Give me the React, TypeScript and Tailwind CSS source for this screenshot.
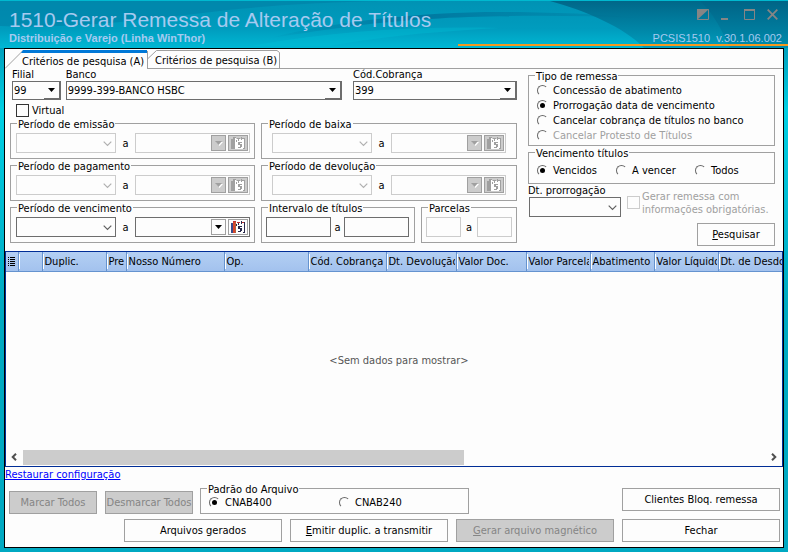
import clsx from "clsx";
import React from "react";

const columns = [
  { label: "", width: "w-[24px]" },
  { label: "Duplic.", width: "w-[64px]" },
  { label: "Pre", width: "w-[20px]" },
  { label: "Nosso Número", width: "w-[98px]" },
  { label: "Op.", width: "w-[84px]" },
  { label: "Cód. Cobrança", width: "w-[78px]" },
  { label: "Dt. Devolução", width: "w-[70px]" },
  { label: "Valor Doc.", width: "w-[70px]" },
  { label: "Valor Parcela", width: "w-[64px]" },
  { label: "Abatimento", width: "w-[64px]" },
  { label: "Valor Líquido", width: "w-[64px]" },
  { label: "Dt. de Desdobramento", width: "w-[120px]" },
];

type GroupProps = {
  title: string;
  className?: string;
  children: React.ReactNode;
};

const Group = ({ title, className, children }: GroupProps) => (
  <fieldset className={clsx("min-w-0 border border-[#a0a0a0]", className)}>
    <legend className="ml-1.5 h-3 bg-[#fdfdfd] px-px leading-4">{title}</legend>
    {children}
  </fieldset>
);

type ComboProps = {
  id: string;
  value: string;
  label: string;
  className?: string;
};

const Combo = ({ id, value, label, className }: ComboProps) => (
  <div className={className}>
    <label htmlFor={id} className="block leading-3">
      {label}
    </label>
    <div className="relative">
      <select
        id={id}
        className="block h-[19px] w-full appearance-none border border-[#6d6d6d] bg-[#fdfdfd] pl-px"
      >
        <option>{value}</option>
      </select>
      <span className="pointer-events-none absolute right-px bottom-px flex h-[17px] w-4 items-center justify-center border-r border-b border-[#6d6d6d]">
        <svg width="7" height="4" viewBox="0 0 7 4">
          <path d="M0 0h7L3.5 4z" fill="#000" />
        </svg>
      </span>
    </div>
  </div>
);

type DateSelectProps = {
  label: string;
  id?: string;
  disabled?: boolean;
  className?: string;
};

const DateSelect = ({ label, id, disabled, className }: DateSelectProps) => (
  <div className={clsx("relative", className)}>
    <select
      id={id}
      aria-label={id ? undefined : label}
      disabled={disabled}
      className="block h-5 w-full appearance-none border border-[#6d6d6d] bg-[#fdfdfd] opacity-100 disabled:border-[#cccccc]"
    />
    <svg
      className={clsx(
        "pointer-events-none absolute top-2 right-1",
        disabled ? "text-[#b0b0b0]" : "text-[#606060]"
      )}
      width="9"
      height="6"
      viewBox="0 0 9 6"
    >
      <path d="M.7.7l3.8 3.8L8.3.7" fill="none" stroke="currentColor" strokeWidth="1.2" />
    </svg>
  </div>
);

const CalendarIcon = ({ disabled }: { disabled?: boolean }) => {
  const ink = disabled ? "#a0a0a0" : "#28284a";
  return (
    <svg width="16" height="15" viewBox="0 0 16 15" shapeRendering="crispEdges">
      <path d="M1 3h2v10H1z" fill={disabled ? "#a0a0a0" : "#3a4a8a"} />
      <path d="M3 2h2v11H3z" fill={disabled ? "#a0a0a0" : "#d8452c"} />
      <path d="M5 2h1v11H5z" fill={disabled ? "#ffffff" : "#b0643c"} />
      <path d="M6 3h8v10H6z" fill="#ffffff" />
      <path d="M3 1h3v1H3zM7 2h3v1H7zM12 2h2v1h-2z" fill={disabled ? "#a0a0a0" : "#c03030"} />
      <path d="M8 3h1v2H8zM11 1h1v3h-1zM14 2h1v11h-1zM13 12h1v1h-1zM6 4h1v2H6z" fill={ink} />
      <path d="M8 6h4v1h-4zM8 7h2v1H8zM8 8h4v1H8zM10 9h2v2h-2zM8 11h3v1H8z" fill={ink} />
    </svg>
  );
};

const DateBox = ({ label, disabled }: { label: string; disabled?: boolean }) => {
  const button = clsx(
    "flex h-4 items-center justify-center border border-[#a0a0a0]",
    disabled ? "bg-[#cccccc]" : "bg-[#fdfdfd]"
  );
  return (
    <div
      className={clsx(
        "flex h-5 w-[115px] items-center gap-0.5 border pr-px",
        disabled ? "border-[#cccccc]" : "border-[#6d6d6d]"
      )}
    >
      <input
        type="text"
        aria-label={label}
        disabled={disabled}
        className="h-full min-w-0 flex-1 bg-transparent px-1 outline-none"
      />
      <button type="button" aria-label={`${label}: abrir`} disabled={disabled} className={clsx(button, "w-[15px]")}>
        <svg width="8" height="5" viewBox="0 0 8 5">
          {disabled && <path d="M1 1h7L4.5 5z" fill="#fff" />}
          <path d="M0 0h7L3.5 4z" fill={disabled ? "#a0a0a0" : "#000"} />
        </svg>
      </button>
      <button type="button" aria-label={`${label}: calendário`} disabled={disabled} className={clsx(button, "w-5")}>
        <CalendarIcon disabled={disabled} />
      </button>
    </div>
  );
};

const Period = ({ title, disabled, wide }: { title: string; disabled?: boolean; wide?: boolean }) => (
  <Group title={title}>
    <div className={clsx("flex items-center pt-1 pb-[5px]", wide ? "pl-2.5" : "pl-[5px]")}>
      <DateSelect label={`${title}, início`} disabled={disabled} className="w-[100px]" />
      <span className="w-[19px] text-center">a</span>
      <DateBox label={`${title}, fim`} disabled={disabled} />
    </div>
  </Group>
);

type RadioProps = {
  name: string;
  label: string;
  checked?: boolean;
  disabled?: boolean;
  className?: string;
};

const Radio = ({ name, label, checked, disabled, className }: RadioProps) => (
  <label className={clsx("flex h-[15px] items-center gap-[5px]", disabled && "text-[#a0a0a0]", className)}>
    <input
      type="radio"
      name={name}
      defaultChecked={checked}
      disabled={disabled}
      className="flex size-[11px] shrink-0 appearance-none items-center justify-center rounded-full border border-transparent border-t-[#696969] border-l-[#696969] before:size-[5px] before:rounded-full checked:before:bg-black"
    />
    {label}
  </label>
);

const Button = ({ disabled, className, children }: { disabled?: boolean; className?: string; children: React.ReactNode }) => (
  <button
    type="button"
    disabled={disabled}
    className={clsx(
      "h-[23px] border border-[#a0a0a0] whitespace-nowrap",
      disabled ? "bg-[#cccccc] text-[#858585]" : "bg-[#fdfdfd]",
      className
    )}
  >
    {children}
  </button>
);

const textBox = "h-5 min-w-0 border bg-[#fdfdfd] px-1 outline-none";

const TitleBar = () => (
  <header className="relative h-12">
    <svg className="absolute inset-0 h-full w-full" viewBox="0 0 788 48" preserveAspectRatio="none">
      <defs>
        <linearGradient id="sky" x1="0" y1="0" x2="0" y2="1">
          <stop offset="0" stopColor="#0092b4" />
          <stop offset="0.6" stopColor="#009cbe" />
          <stop offset="1" stopColor="#00b8d4" />
        </linearGradient>
        <linearGradient id="deep" x1="0" y1="0" x2="0" y2="1">
          <stop offset="0" stopColor="#005c7e" />
          <stop offset="1" stopColor="#0098b8" />
        </linearGradient>
        <linearGradient id="swoop" x1="0" y1="0" x2="1" y2="0">
          <stop offset="0" stopColor="#0078a0" stopOpacity="0" />
          <stop offset="0.4" stopColor="#0078a0" />
          <stop offset="1" stopColor="#0082a6" stopOpacity="0.3" />
        </linearGradient>
      </defs>
      <path d="M0 0h788v48H0z" fill="url(#sky)" />
      <path d="M0 26C90 30 180 14 250 8 300 3 350 2 380 1H0z" fill="#0080a6" opacity=".6" />
      <path d="M270 38C330 22 420 12 500 12c60 0 110 3 140 6-70-3-150-3-210 1-70 4-110 12-160 19z" fill="url(#swoop)" />
      <path d="M250 46C340 30 420 26 500 28 420 32 360 40 330 46z" fill="#00c0d8" opacity=".35" />
      <path d="M550 1c36 10 74 26 94 47h144V1z" fill="url(#deep)" opacity=".8" />
      <path d="M700 1c14 12 22 30 30 47h58V1z" fill="#005c7e" opacity=".25" />
      <path d="M0 .5h788" stroke="#00b9d0" />
      <path d="M458 45h330" stroke="#f7981d" strokeWidth="2" />
    </svg>
    <div className="relative flex h-full justify-between pr-1.5 pl-[9px] font-['Liberation_Sans',Arial,sans-serif] text-[#a6caf0]">
      <div className="pt-[7px]">
        <h1 className="text-[21px] leading-[25px]">1510-Gerar Remessa de Alteração de Títulos</h1>
        <p className="text-[11px] leading-3 font-bold">Distribuição e Varejo (Linha WinThor)</p>
      </div>
      <div className="flex flex-col items-end pt-[9px]">
        <div className="flex gap-3 pr-1 text-[#858585]">
          <button type="button" aria-label="Aparência">
            <svg width="12" height="11" viewBox="0 0 12 11">
              <path d="M.5.5h11v10H.5z" fill="none" stroke="currentColor" />
              <path d="M0 0h12L0 11z" fill="currentColor" />
            </svg>
          </button>
          <button type="button" aria-label="Minimizar">
            <svg width="11" height="11" viewBox="0 0 11 11">
              <path d="M0 9h7v2H0z" fill="currentColor" />
            </svg>
          </button>
          <button type="button" aria-label="Maximizar">
            <svg width="11" height="11" viewBox="0 0 11 11">
              <path d="M.5.5h10v10H.5z" fill="none" stroke="currentColor" />
              <path d="M0 0h11v2H0z" fill="currentColor" />
            </svg>
          </button>
          <button type="button" aria-label="Fechar janela">
            <svg width="11" height="11" viewBox="0 0 11 11">
              <path d="M.7.7l9.6 9.6M10.3.7L.7 10.3" stroke="currentColor" strokeWidth="1.8" />
            </svg>
          </button>
        </div>
        <p className="mt-3 text-[11px] leading-3 whitespace-pre">PCSIS1510  v.30.1.06.002</p>
      </div>
    </div>
  </header>
);

const Tabs = () => (
  <div role="tablist" className="flex h-5 items-end border-b border-[#a0a0a0]">
    <button type="button" role="tab" aria-selected="true" className="relative -mb-px h-5 w-[143px] bg-[#fdfdfd] pt-1 pl-[17px] text-left whitespace-nowrap">
      <svg className="absolute inset-0 h-full w-full" viewBox="0 0 143 20">
        <path d="M0 19.5L18 1.5M142.5 2v18" fill="none" stroke="#a0a0a0" />
        <path d="M18 1h124v3H16z" fill="#0078d7" />
      </svg>
      <span className="relative">Critérios de pesquisa (A)</span>
    </button>
    <button type="button" role="tab" aria-selected="false" className="relative h-[19px] w-[132px] pt-1 pl-[7px] text-left whitespace-nowrap">
      <svg className="absolute inset-0 h-full w-full" viewBox="0 0 132 19">
        <path d="M0 9.5L8.5 1.5H129l2.5 2V19" fill="none" stroke="#a0a0a0" />
      </svg>
      <span className="relative">Critérios de pesquisa (B)</span>
    </button>
  </div>
);

const Filters = () => (
  <div className="flex justify-between pr-2 pb-[5px] pl-[5px]">
    <div className="w-[507px]">
      <div className="flex pl-0.5">
        <Combo id="filial" label="Filial" value="99" className="w-[49px]" />
        <Combo id="banco" label="Banco" value="9999-399-BANCO HSBC" className="ml-[5px] w-[278px]" />
        <Combo id="cobranca" label="Cód.Cobrança" value="399" className="ml-[11px] w-[165px]" />
      </div>
      <label className="mt-1 ml-1.5 flex h-[13px] w-fit items-center gap-[3px]">
        <input type="checkbox" className="size-[13px] appearance-none border border-[#333333] bg-[#fdfdfd]" />
        Virtual
      </label>
      <div className="flex justify-between">
        <div className="flex w-[245px] flex-col">
          <Period title="Período de emissão" disabled />
          <Period title="Período de pagamento" disabled />
          <Period title="Período de vencimento" />
        </div>
        <div className="flex w-64 flex-col">
          <Period title="Período de baixa" disabled wide />
          <Period title="Período de devolução" disabled wide />
          <div className="flex justify-between">
            <Group title="Intervalo de títulos" className="w-[154px]">
              <div className="flex items-center px-1 pt-1 pb-[5px]">
                <input type="text" aria-label="Título inicial" className={clsx(textBox, "w-[65px] border-[#6d6d6d]")} />
                <span className="w-[13px] text-center">a</span>
                <input type="text" aria-label="Título final" className={clsx(textBox, "w-[65px] border-[#6d6d6d]")} />
              </div>
            </Group>
            <Group title="Parcelas" className="w-24">
              <div className="flex items-center px-1 pt-1 pb-[5px]">
                <input type="text" disabled aria-label="Parcela inicial" className={clsx(textBox, "w-[35px] border-[#cccccc]")} />
                <span className="w-4 text-center">a</span>
                <input type="text" disabled aria-label="Parcela final" className={clsx(textBox, "w-[35px] border-[#cccccc]")} />
              </div>
            </Group>
          </div>
        </div>
      </div>
    </div>

    <div className="flex w-[247px] flex-col">
      <Group title="Tipo de remessa">
        <div className="pt-0.5 pb-0.5 pl-2">
          <Radio name="tipo" label="Concessão de abatimento" />
          <Radio name="tipo" label="Prorrogação data de vencimento" checked />
          <Radio name="tipo" label="Cancelar cobrança de títulos no banco" />
          <Radio name="tipo" label="Cancelar Protesto de Títulos" disabled />
        </div>
      </Group>
      <Group title="Vencimento títulos">
        <div className="flex pt-[5px] pb-[5px] pl-2">
          <Radio name="vencimento" label="Vencidos" checked className="w-[79px]" />
          <Radio name="vencimento" label="A vencer" className="w-[79px]" />
          <Radio name="vencimento" label="Todos" />
        </div>
      </Group>
      <div className="flex">
        <div className="w-[93px]">
          <label htmlFor="prorrogacao" className="block leading-[13px]">
            Dt. prorrogação
          </label>
          <DateSelect id="prorrogacao" label="Dt. prorrogação" className="ml-px" />
        </div>
        <label className="mt-1.5 ml-1.5 flex items-start gap-0.5 text-[#a0a0a0]">
          <input type="checkbox" disabled className="mt-1.5 size-[13px] appearance-none border border-[#cccccc]" />
          <span className="leading-[13px] whitespace-nowrap">
            Gerar remessa com
            <br />
            informações obrigatórias.
          </span>
        </label>
      </div>
      <Button className="mt-1.5 w-[78px] self-end">
        <u>P</u>esquisar
      </Button>
    </div>
  </div>
);

const Grid = () => (
  <div className="flex flex-1 flex-col border border-[#002d96]">
    <div className="overflow-hidden">
      <table className="w-full table-fixed border-collapse">
        <thead>
          <tr className="h-[19px] bg-linear-to-b from-[#b3cff3] to-[#a3c2ee]">
            <th className="w-3 border-r border-b border-[#6593cf] p-0">
              <svg width="11" height="11" viewBox="0 0 11 11" shapeRendering="crispEdges">
                <path d="M2 1h1v1H2zM4 1h5v1H4zM2 3h1v1H2zM4 3h5v1H4zM2 5h1v1H2zM4 5h5v1H4zM2 7h1v1H2zM4 7h5v1H4zM2 9h1v1H2zM4 9h5v1H4z" fill="#000" />
              </svg>
            </th>
            {columns.map((col) => (
              <th
                key={col.label}
                scope="col"
                className={clsx(
                  "overflow-hidden border-r border-b border-[#6593cf] p-0 text-left font-normal whitespace-nowrap",
                  col.width
                )}
              >
                <div className="mr-px h-[15px] overflow-hidden border-l border-white pl-px leading-[15px]">{col.label}</div>
              </th>
            ))}
          </tr>
        </thead>
      </table>
    </div>
    <p className="flex min-h-40 flex-1 items-center justify-center pl-2.5 text-[#555555]">&lt;Sem dados para mostrar&gt;</p>
    <div className="flex h-[17px] items-center justify-between pr-[5px] pb-px pl-[5px]">
      <button type="button" aria-label="Rolar para a esquerda" className="w-3">
        <svg width="6" height="8" viewBox="0 0 6 8">
          <path d="M5 .7L1.7 4 5 7.3" fill="none" stroke="#505050" strokeWidth="2" />
        </svg>
      </button>
      <div className="h-[15px] flex-1">
        <div className="h-full w-[59%] bg-[#cccccc]" />
      </div>
      <button type="button" aria-label="Rolar para a direita">
        <svg width="6" height="8" viewBox="0 0 6 8">
          <path d="M1 .7L4.3 4 1 7.3" fill="none" stroke="#505050" strokeWidth="2" />
        </svg>
      </button>
    </div>
  </div>
);

const Footer = () => (
  <footer className="pr-[3px] pb-[5px]">
    <a href="#" className="block w-fit leading-[15px] text-[#0000ff] underline">
      Restaurar configuração
    </a>
    <div className="flex items-end pl-1">
      <Button disabled className="w-[88px]">
        Marcar Todos
      </Button>
      <Button disabled className="ml-2 w-[88px]">
        Desmarcar Todos
      </Button>
      <Group title="Padrão do Arquivo" className="ml-[7px] w-[269px]">
        <div className="flex pt-px pb-[3px] pl-2">
          <Radio name="padrao" label="CNAB400" checked className="w-[130px]" />
          <Radio name="padrao" label="CNAB240" />
        </div>
      </Group>
      <Button className="mb-[3px] ml-auto w-[158px]">Clientes Bloq. remessa</Button>
    </div>
    <div className="mt-[5px] flex justify-end gap-2">
      <Button className="w-[158px]">Arquivos gerados</Button>
      <Button className="w-[158px]">
        <u>E</u>mitir duplic. a transmitir
      </Button>
      <Button disabled className="w-[158px]">
        <u>G</u>erar arquivo magnético
      </Button>
      <Button className="w-[158px]">Fechar</Button>
    </div>
  </footer>
);

export default function App() {
  return (
    <div className="flex min-h-screen flex-col bg-linear-to-b from-[#0090b0] from-5% via-[#00d0e4] via-20% to-[#00a9c2] to-55% font-['DejaVu_Sans_Condensed','DejaVu_Sans',sans-serif] text-[11px] leading-[15px] text-black">
      <TitleBar />
      <main className="mr-1 mb-1 ml-1 flex flex-1 flex-col border border-black bg-[#fdfdfd]">
        <Tabs />
        <Filters />
        <Grid />
        <Footer />
      </main>
    </div>
  );
}
